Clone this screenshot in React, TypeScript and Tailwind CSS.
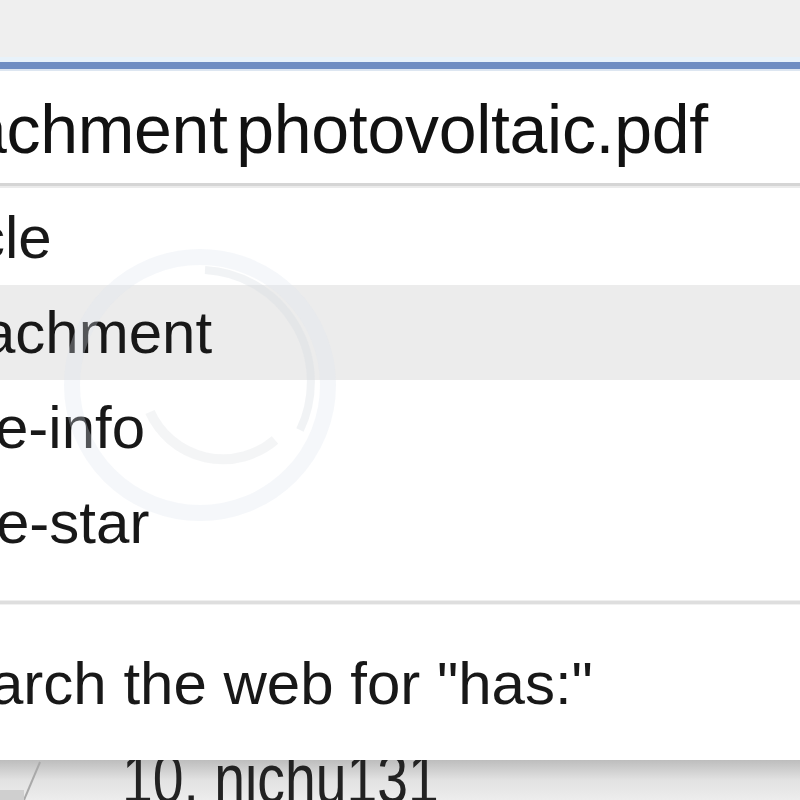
import React from "react";

const items = [
  { text: "cle", offset: "ml-[-25px]", active: false },
  { text: "achment", offset: "ml-[-18px]", active: true },
  { text: "e-info", offset: "ml-[-5px]", active: false },
  { text: "e-star", offset: "ml-[-4px]", active: false },
];

function Watermark() {
  return (
    <svg
      className="absolute left-0 top-0 pointer-events-none"
      width="800"
      height="800"
      viewBox="0 0 800 800"
    >
      <circle cx="200" cy="385" r="128" fill="none" stroke="#dfe6ee" strokeWidth="16" opacity="0.3" />
      <path
        d="M 205 270 A 112 112 0 0 1 300 430"
        fill="none"
        stroke="#d8dde3"
        strokeWidth="8"
        opacity="0.35"
      />
      <path
        d="M 150 412 A 80 80 0 0 0 275 440"
        fill="none"
        stroke="#d9dde2"
        strokeWidth="10"
        opacity="0.3"
      />
    </svg>
  );
}

export default function App() {
  return (
    <div className="relative w-[800px] h-[800px] overflow-hidden bg-white font-['Liberation_Sans',Arial,sans-serif] text-[#181818]">
      <div className="h-[57px] bg-[#efefef]" />
      <div className="h-[5px] bg-[#e8f2fa]" />
      <div className="h-[7px] bg-[#6f8dc2]" />
      <div className="h-[2px] bg-[#dde6f1]" />

      {/* input */}
      <div className="h-[112px] bg-white overflow-hidden pt-[24px]">
        <div className="ml-[-31px] whitespace-nowrap text-[68px] leading-none tracking-[-0.3px] [word-spacing:-10px] text-[#111]">
          achment photovoltaic.pdf
        </div>
      </div>
      <div className="h-[3px] bg-[#d5d5d5]" />
      <div className="h-[2px] bg-[#ebebeb]" />

      {/* dropdown */}
      <div className="pt-[2px]">
        {items.map((it) => (
          <div
            key={it.text}
            className={`h-[95px] overflow-hidden ${it.active ? "bg-[#ececec]" : "bg-white"}`}
          >
            <div className={`${it.offset} whitespace-nowrap text-[60px] leading-[95px]`}>
              {it.text}
            </div>
          </div>
        ))}
        <div className="h-[30px]" />
        <div className="h-[1px] bg-[#efefef]" />
        <div className="h-[3px] bg-[#dedede]" />
        <div className="h-[1px] bg-[#f1f1f1]" />
        <div className="h-[155px] overflow-hidden pt-[49px]">
          <div className="ml-[-10px] whitespace-nowrap text-[60px] leading-none">
            arch the web for "has:"
          </div>
        </div>
      </div>

      {/* strip below dropdown */}
      <div className="relative h-[40px] overflow-hidden bg-gradient-to-b from-[#bdbdbd] via-[#e2e2e2] to-[#ededed] flex items-end">
        <svg className="absolute left-0 top-0" width="60" height="40" viewBox="0 0 60 40">
          <line x1="40" y1="2" x2="24" y2="40" stroke="#a9a9a9" strokeWidth="2" />
          <rect x="0" y="30" width="24" height="10" fill="#cfcfcf" />
        </svg>
        <div className="ml-[122px] mb-[-14px] whitespace-nowrap text-[70px] leading-none origin-left scale-x-[0.79] text-[#222]">
          10. nichu131
        </div>
      </div>

      <Watermark />
    </div>
  );
}
